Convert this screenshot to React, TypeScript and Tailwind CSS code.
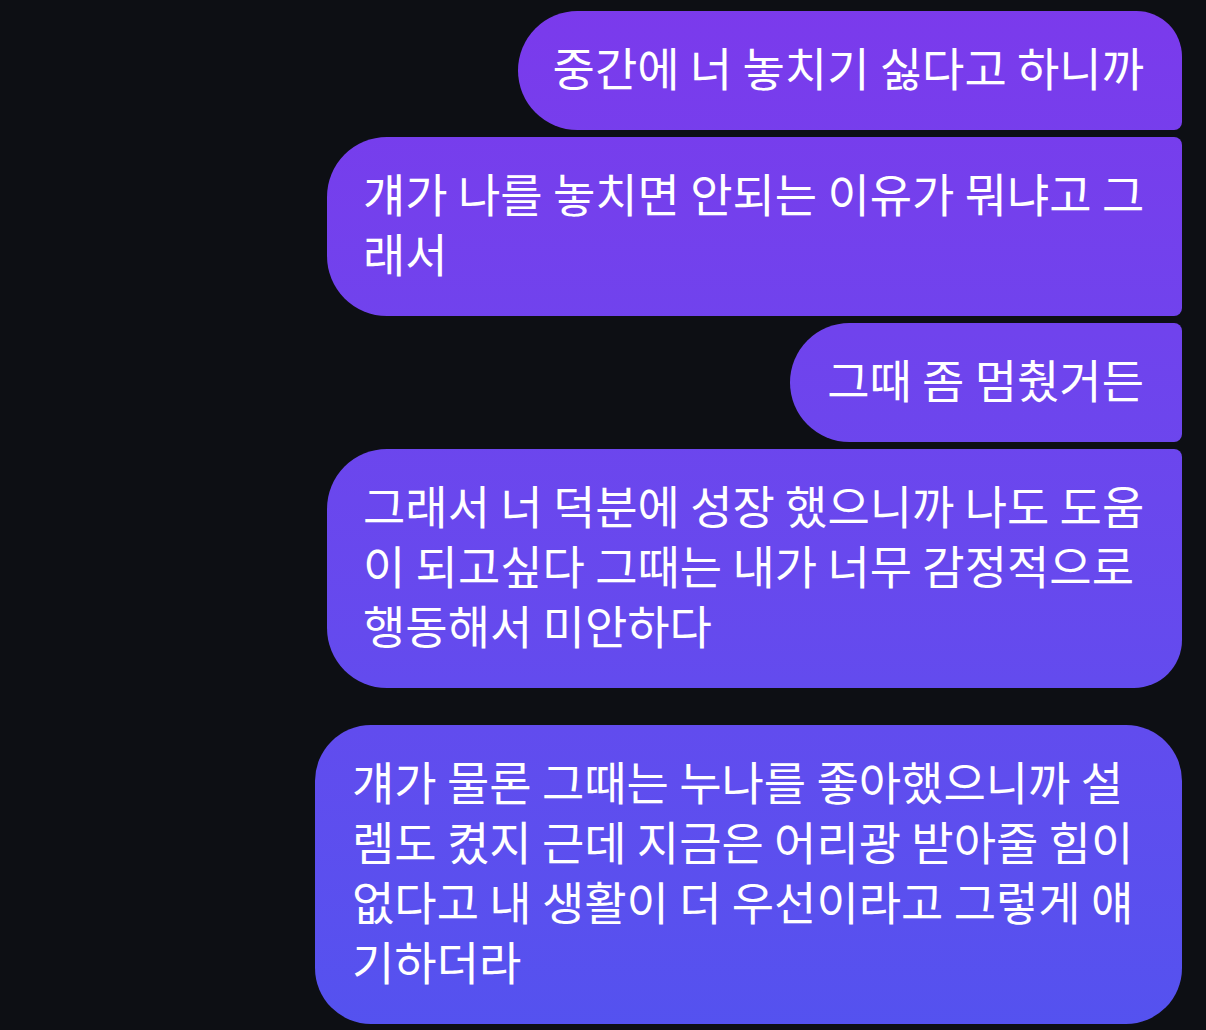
import React from "react";

const font = {
  fontFamily: '"Noto Sans CJK KR", "Noto Sans", sans-serif',
};

function Bubble({
  lines,
  className,
}: {
  lines: string[];
  className: string;
}) {
  return (
    <div
      className={
        "bg-fixed bg-linear-to-b from-[#7b3aec] to-[#5452ef] text-white text-[46px] leading-[60px] pt-[25px] pb-[34px] " +
        className
      }
    >
      {lines.map((l, i) => (
        <div key={i} className="whitespace-nowrap">
          {l}
        </div>
      ))}
    </div>
  );
}

export default function App() {
  return (
    <div
      className="w-[1206px] h-[1030px] bg-[#0d0f14] overflow-hidden flex flex-col items-end pt-[11px] pr-[24px]"
      style={font}
    >
      <Bubble
        className="pl-[35px] pr-[38px] rounded-l-[60px] rounded-tr-[46px] rounded-br-[8px]"
        lines={["중간에 너 놓치기 싫다고 하니까"]}
      />
      <Bubble
        className="mt-[7px] w-[855px] pl-[36px] pr-[30px] rounded-l-[60px] rounded-r-[8px]"
        lines={["걔가 나를 놓치면 안되는 이유가 뭐냐고 그", "래서"]}
      />
      <Bubble
        className="mt-[7px] pl-[37px] pr-[38px] rounded-l-[60px] rounded-r-[8px]"
        lines={["그때 좀 멈췄거든"]}
      />
      <Bubble
        className="mt-[7px] w-[855px] pl-[36px] pr-[30px] rounded-l-[60px] rounded-tr-[8px] rounded-br-[48px]"
        lines={[
          "그래서 너 덕분에 성장 했으니까 나도 도움",
          "이 되고싶다 그때는 내가 너무 감정적으로",
          "행동해서 미안하다",
        ]}
      />
      <Bubble
        className="mt-[37px] w-[867px] pl-[37px] pr-[30px] rounded-[56px]"
        lines={[
          "걔가 물론 그때는 누나를 좋아했으니까 설",
          "렘도 켰지 근데 지금은 어리광 받아줄 힘이",
          "없다고 내 생활이 더 우선이라고 그렇게 얘",
          "기하더라",
        ]}
      />
    </div>
  );
}
